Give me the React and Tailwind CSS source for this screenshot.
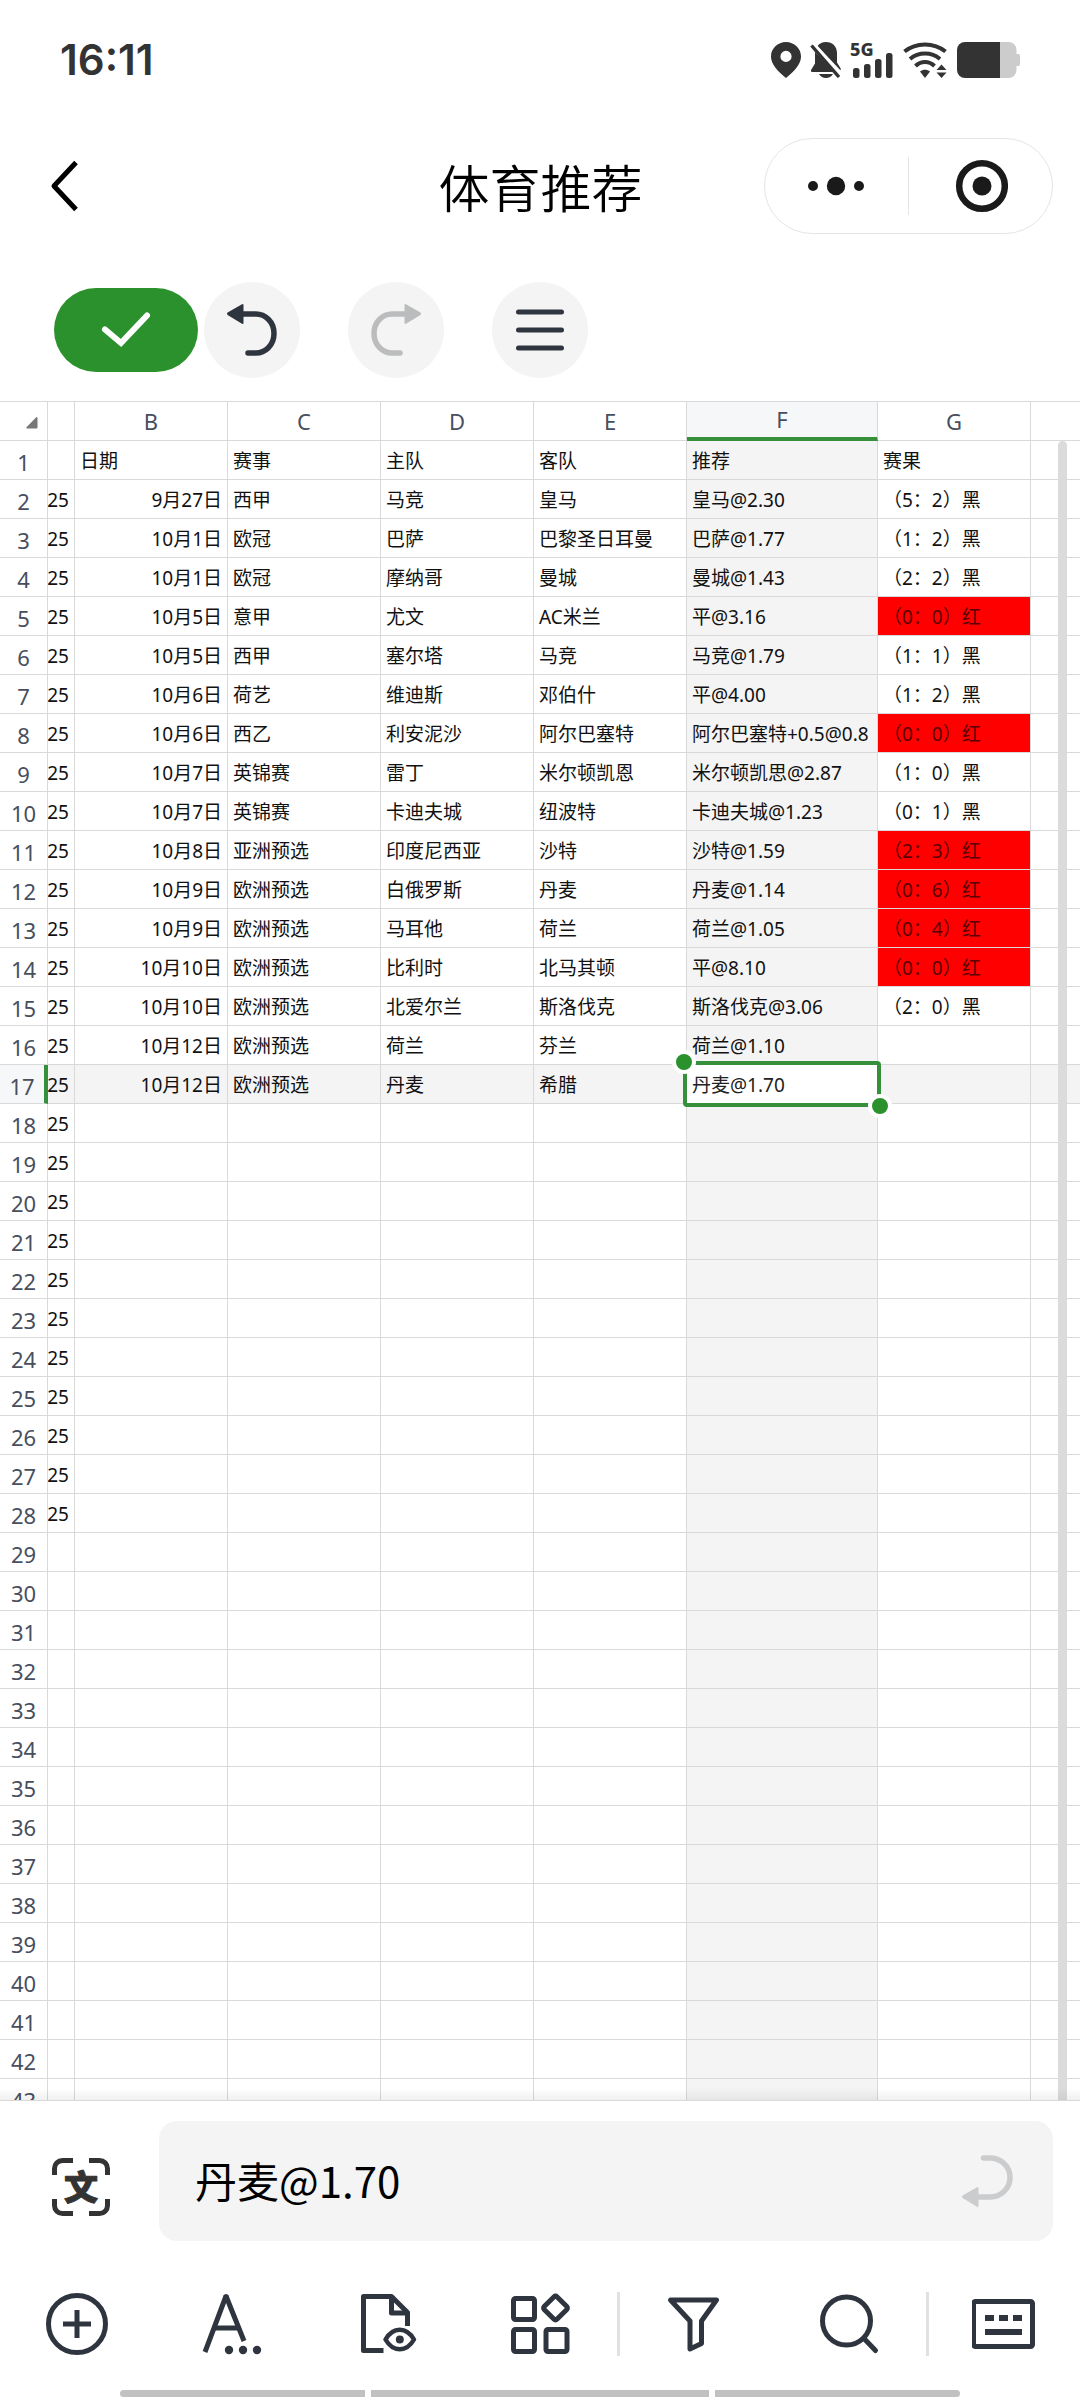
import React, { useState } from 'react';

const columns = ['B', 'C', 'D', 'E', 'F', 'G'];
const ROW_COUNT = 43;
const ACTIVE_ROW = 17;
const ACTIVE_COL = 'F';

const records = [
  ['日期', '赛事', '主队', '客队', '推荐', '赛果'],
  ['9月27日', '西甲', '马竞', '皇马', '皇马@2.30', '（5：2）黑'],
  ['10月1日', '欧冠', '巴萨', '巴黎圣日耳曼', '巴萨@1.77', '（1：2）黑'],
  ['10月1日', '欧冠', '摩纳哥', '曼城', '曼城@1.43', '（2：2）黑'],
  ['10月5日', '意甲', '尤文', 'AC米兰', '平@3.16', '（0：0）红'],
  ['10月5日', '西甲', '塞尔塔', '马竞', '马竞@1.79', '（1：1）黑'],
  ['10月6日', '荷艺', '维迪斯', '邓伯什', '平@4.00', '（1：2）黑'],
  ['10月6日', '西乙', '利安泥沙', '阿尔巴塞特', '阿尔巴塞特+0.5@0.8', '（0：0）红'],
  ['10月7日', '英锦赛', '雷丁', '米尔顿凯恩', '米尔顿凯思@2.87', '（1：0）黑'],
  ['10月7日', '英锦赛', '卡迪夫城', '纽波特', '卡迪夫城@1.23', '（0：1）黑'],
  ['10月8日', '亚洲预选', '印度尼西亚', '沙特', '沙特@1.59', '（2：3）红'],
  ['10月9日', '欧洲预选', '白俄罗斯', '丹麦', '丹麦@1.14', '（0：6）红'],
  ['10月9日', '欧洲预选', '马耳他', '荷兰', '荷兰@1.05', '（0：4）红'],
  ['10月10日', '欧洲预选', '比利时', '北马其顿', '平@8.10', '（0：0）红'],
  ['10月10日', '欧洲预选', '北爱尔兰', '斯洛伐克', '斯洛伐克@3.06', '（2：0）黑'],
  ['10月12日', '欧洲预选', '荷兰', '芬兰', '荷兰@1.10', ''],
  ['10月12日', '欧洲预选', '丹麦', '希腊', '丹麦@1.70', ''],
];

// ================= STATUS BAR =================
const StatusBar = () => (
  <div className="flex h-[120px] shrink-0 items-center justify-between px-[60px] text-[#333333]">
    <span className="font-['Inter',sans-serif] text-[42px] leading-none font-semibold">16:11</span>
    <div className="flex h-9 items-center gap-[9px]">
      <svg width="30" height="36" viewBox="0 0 30 36" fill="currentColor">
        <path fillRule="evenodd" d="M15 0C6.700 0 0 6.500 0 14.500 0 22.500 7 29.500 15 36c8-6.500 15-13.500 15-21.500C30 6.500 23.300 0 15 0Zm0 8.800a5.600 5.600 0 1 1 0 11.200 5.600 5.600 0 0 1 0-11.200Z" />
      </svg>
      <svg width="32" height="36" viewBox="0 0 32 36" fill="currentColor">
        <path d="M7.500 4C9.600 1.300 12.500 0 16 0c6.500 0 11 4.600 11 11v9.500l3.600 5.800c.3.600.2 1.400-.2 2L7.500 4Z" />
        <path d="M4.600 9.500 24 30H2.200C1 30 .6 28.800 1.200 27.800L5 21.500V11l-.4-1.500Z" />
        <path d="M9 32h14c-1.500 2.600-4 4-7 4s-5.500-1.400-7-4Z" />
        <path d="M1.500 3.500 29 35" stroke="currentColor" strokeWidth="3.400" />
        <path d="M4.500 2 32 33.500" stroke="#ffffff" strokeWidth="2" />
      </svg>
      <svg className="overflow-visible" width="43" height="36" viewBox="0 0 43 36" fill="currentColor">
        <text x="-1" y="14" fontSize="18" fontWeight="800" fontFamily="Noto Sans, sans-serif">5G</text>
        <rect x="2" y="26" width="6.500" height="10" rx="2.500" />
        <rect x="13" y="22" width="6.500" height="14" rx="2.500" />
        <rect x="24" y="17" width="6.500" height="19" rx="2.500" />
        <rect x="35" y="11" width="6.500" height="25" rx="2.500" />
      </svg>
      <svg width="45" height="36" viewBox="0 0 45 36" fill="none" stroke="currentColor" strokeWidth="4">
        <path d="M1.500 9.500C13 0 31 0 42.500 9.500" />
        <path d="M7 17C15.500 9.800 28.500 9.800 37 17" />
        <path d="M12.500 24C18 18.700 26 18.700 31.500 24" />
        <path d="M17 29.500c3-2.200 7-2.200 10 0L22 36Z" fill="currentColor" stroke="none" />
        <path d="M38.500 22.500 43.500 28h-10ZM38.500 36 43.500 30.500h-10Z" fill="currentColor" stroke="none" />
      </svg>
      <svg width="63" height="36" viewBox="0 0 63 36">
        <path d="M42 0h9.500a8 8 0 0 1 8 8v4h1.500a2 2 0 0 1 2 2v8a2 2 0 0 1-2 2h-1.500v4a8 8 0 0 1-8 8H42Z" fill="#cccccc" />
        <path d="M8 0h35v36H8a8 8 0 0 1-8-8V8a8 8 0 0 1 8-8Z" fill="#333333" />
      </svg>
    </div>
  </div>
);

// ================= TITLE BAR =================
const TitleBar = () => (
  <header className="grid h-[132px] shrink-0 grid-cols-[1fr_auto_1fr] items-center pr-[27px] pl-[50px]">
    <button type="button" aria-label="返回" className="justify-self-start">
      <svg width="28" height="52" viewBox="0 0 28 52" fill="none" stroke="#000000" strokeWidth="5">
        <path d="M26 2.500 4 26l22 23.500" strokeLinejoin="round" />
      </svg>
    </button>
    <h1 className="pt-1 pr-[22px] text-[51px] leading-[60px] font-[350] text-black">体育推荐</h1>
    <div className="flex h-24 w-[289px] items-center justify-self-end rounded-full border border-[#e5e5e5]">
      <button type="button" aria-label="更多" className="flex flex-1 justify-center">
        <svg width="58" height="20" viewBox="0 0 58 20" fill="#1a1a1a">
          <circle cx="5" cy="10" r="5" />
          <circle cx="28" cy="10" r="9.200" />
          <circle cx="51" cy="10" r="5" />
        </svg>
      </button>
      <span className="h-[58px] w-px bg-[#e5e5e5]" />
      <button type="button" aria-label="关闭" className="flex flex-1 justify-center">
        <svg width="54" height="54" viewBox="0 0 54 54">
          <circle cx="28" cy="27" r="22.800" fill="none" stroke="#1a1a1a" strokeWidth="6.500" />
          <circle cx="28" cy="27" r="9.500" fill="#1a1a1a" />
        </svg>
      </button>
    </div>
  </header>
);

const UndoIcon = () => (
  <svg width="50" height="54" viewBox="0 0 50 54" fill="none" stroke="currentColor" strokeWidth="5.500" strokeLinecap="round">
    <path d="M14 11h15c9 0 18 7.500 18 19.500S38 50 29 50h-8" />
    <path d="M15.500 2v18L1.500 11.500q-1-.7 0-1.500Z" fill="currentColor" strokeWidth="2" strokeLinejoin="round" />
  </svg>
);

// ================= EDIT BAR =================
const EditBar = () => (
  <div className="flex shrink-0 items-center pt-[30px] pb-[23px] pl-[54px]">
    <button type="button" aria-label="完成" className="flex h-[84px] w-36 items-center justify-center rounded-full bg-[#2b912d]">
      <svg width="50" height="38" viewBox="0 0 50 38" fill="none" stroke="#ffffff" strokeWidth="6" strokeLinecap="round">
        <path d="M4 18.500 20 32 46 4.500" />
      </svg>
    </button>
    <div className="flex items-center gap-12 pl-1.5">
      <button type="button" aria-label="撤销" className="flex size-24 items-center justify-center rounded-full bg-[#f4f4f4] text-[#2f353f]">
        <UndoIcon />
      </button>
      <button type="button" aria-label="重做" className="flex size-24 items-center justify-center rounded-full bg-[#f4f4f4] text-[#bbbcbd]">
        <span className="-scale-x-100"><UndoIcon /></span>
      </button>
      <button type="button" aria-label="菜单" className="flex size-24 items-center justify-center rounded-full bg-[#f4f4f4]">
        <svg width="48" height="42" viewBox="0 0 48 42" stroke="#2f353f" strokeWidth="5" strokeLinecap="round">
          <path d="M2.500 3h43M2.500 21h43M2.500 39h43" />
        </svg>
      </button>
    </div>
  </div>
);

// ================= SHEET =================
const Cell = ({ row, col, value }) => {
  const active = row === ACTIVE_ROW && col === ACTIVE_COL;
  const highlighted = row === ACTIVE_ROW || col === ACTIVE_COL;
  const won = col === 'G' && value.endsWith('红');

  let tone = 'text-[#111111]';
  if (active) tone = 'relative z-10 bg-white text-[#222222]';
  else if (won) tone = 'bg-[#ff0000] text-[#5a0000]';
  else if (highlighted) tone = 'bg-[#f4f4f4] text-[#111111]';

  return (
    <td className={`h-[39px] border-r border-b border-[#d9d9d9] p-0 ${tone}`}>
      <div className={`h-[38px] overflow-hidden px-[5px] leading-[40px] whitespace-nowrap ${col === 'B' && row > 1 ? 'text-right' : 'text-left'}`}>
        {value}
      </div>
      {active && (
        <div className="absolute -inset-1 rounded-sm border-4 border-[#368f3a]">
          <span className="absolute -top-[15px] -left-[15px] size-6 rounded-full border-4 border-white bg-[#2b912d]" />
          <span className="absolute -right-[15px] -bottom-[15px] size-6 rounded-full border-4 border-white bg-[#2b912d]" />
        </div>
      )}
    </td>
  );
};

const Sheet = () => {
  const rows = Array.from({ length: ROW_COUNT }, (_, i) => i + 1);

  return (
    <main className="relative min-h-0 flex-1 overflow-hidden border-t border-[#d9d9d9]">
      <table className="w-full table-fixed border-separate border-spacing-0 text-[19px]">
        <colgroup>
          <col className="w-12" />
          <col className="w-[27px]" />
          <col className="w-[153px]" />
          <col className="w-[153px]" />
          <col className="w-[153px]" />
          <col className="w-[153px]" />
          <col className="w-[191px]" />
          <col className="w-[153px]" />
          <col />
        </colgroup>
        <thead>
          <tr className="text-[22px] text-[#474f5e]">
            <th className="h-[39px] border-r border-b border-[#d9d9d9] p-0">
              <svg className="mt-1 ml-[26px]" width="12" height="12" viewBox="0 0 12 12" fill="#777777">
                <path d="M10.500 0v0q1 0 1 1v9.500q0 1-1 1H1.500q-1.800 0-.8-1.400Z" />
              </svg>
            </th>
            <th className="border-r border-b border-[#d9d9d9] p-0" />
            {columns.map(c => (
              <th
                key={c}
                scope="col"
                className={`h-[39px] border-r p-0 leading-[35px] font-normal ${c === ACTIVE_COL ? 'border-r-[#d9d9d9] border-b-4 border-b-[#368f3a] bg-[#f5f7f9]' : 'border-b border-[#d9d9d9]'}`}
              >
                {c}
              </th>
            ))}
            <th className="border-b border-[#d9d9d9] p-0" />
          </tr>
        </thead>
        <tbody>
          {rows.map(n => {
            const record = records[n - 1] || ['', '', '', '', '', ''];
            const active = n === ACTIVE_ROW;
            return (
              <tr key={n}>
                <th
                  scope="row"
                  className={`h-[39px] border-b border-b-[#d9d9d9] p-0 pt-1 text-[22px] leading-[34px] font-normal text-[#474f5e] ${active ? 'border-r-4 border-r-[#368f3a] bg-[#f5f7f9]' : 'border-r border-r-[#d9d9d9]'}`}
                >
                  {n}
                </th>
                <td className={`border-r border-b border-[#d9d9d9] p-0 ${active ? 'bg-[#f4f4f4]' : ''}`}>
                  <div className="flex h-[38px] justify-end overflow-hidden pr-[5px] leading-[40px] text-[#111111]">
                    {n >= 2 && n <= 28 ? '25' : ''}
                  </div>
                </td>
                {columns.map((c, i) => (
                  <Cell key={c} row={n} col={c} value={record[i]} />
                ))}
                <td className={`border-b border-[#d9d9d9] p-0 ${active ? 'bg-[#f4f4f4]' : ''}`} />
              </tr>
            );
          })}
        </tbody>
      </table>

      {/* Scroll thumb */}
      <div className="absolute top-[39px] right-[13px] bottom-0 w-[9px] rounded-t-full bg-[#dbdbdb]" />
      <div className="absolute inset-x-0 bottom-0 h-3 bg-linear-to-b from-transparent to-black/6" />
    </main>
  );
};

// ================= FORMULA BAR =================
const FormulaBar = () => {
  const [value, setValue] = useState('丹麦@1.70');

  return (
    <div className="flex shrink-0 items-center border-t border-[#d9d9d9] pt-5 pr-[27px]">
      <button type="button" aria-label="翻译" className="w-[159px] pt-3 pl-[52px]">
        <svg width="58" height="58" viewBox="0 0 58 58" fill="none" stroke="#333333" strokeWidth="5">
          <path d="M2.500 17v-6.500a8 8 0 0 1 8-8H21M37 2.500h10.500a8 8 0 0 1 8 8V17M55.500 41v6.500a8 8 0 0 1-8 8H37M21 55.500H10.500a8 8 0 0 1-8-8V41" />
          <text x="29" y="42" textAnchor="middle" fontSize="34" fontWeight="900" fill="#333333" strokeWidth="1" strokeLinejoin="round" fontFamily="Noto Sans CJK SC, sans-serif">文</text>
        </svg>
      </button>
      <div className="flex h-[120px] flex-1 items-center rounded-[18px] bg-[#f4f4f4] pr-[40px] pl-9">
        <input
          aria-label="编辑栏"
          value={value}
          onChange={e => setValue(e.target.value)}
          className="h-full min-w-0 flex-1 bg-transparent pb-1 font-['Noto_Sans_CJK_SC',sans-serif] text-[42px] text-black outline-none"
        />
        <button type="button" aria-label="换行">
          <svg width="51" height="54" viewBox="0 0 51 54" fill="none" stroke="#cbcccd" strokeWidth="5.500" strokeLinecap="round">
            <path d="M21.500 4H28c10 0 20 7.500 20 19.500S38 43 28 43H14" />
            <path d="M15.500 34v18L1.500 43.500q-1-.7 0-1.500Z" fill="#cbcccd" strokeWidth="2" strokeLinejoin="round" />
          </svg>
        </button>
      </div>
    </div>
  );
};

// ================= BOTTOM TOOLS =================
const ToolIcon = ({ children }) => (
  <svg width="64" height="64" viewBox="0 0 64 64" fill="none" stroke="#2f353f" strokeWidth="5">
    {children}
  </svg>
);

const tools = [
  {
    label: '插入',
    icon: (
      <>
        <circle cx="32" cy="32" r="28.500" />
        <path d="M32 18v28M18 32h28" />
      </>
    ),
  },
  {
    label: '字体',
    icon: (
      <>
        <line x1="6" y1="60" x2="27" y2="4" />
        <line x1="27" y1="4" x2="45" y2="49" />
        <line x1="14" y1="36" x2="39" y2="36" />
        <circle cx="27" cy="4.500" r="2.500" fill="#2f353f" stroke="none" />
        <g fill="#2f353f" stroke="none">
          <circle cx="30" cy="58" r="4.200" />
          <circle cx="44" cy="58" r="4.200" />
          <circle cx="58" cy="58" r="4.200" />
        </g>
      </>
    ),
  },
  {
    label: '查看',
    icon: (
      <g strokeLinejoin="round">
        <path d="M29.500 58.500H9.500v-54h28L53.500 20.500V34" />
        <path d="M37.500 4.500v16.500h16" />
        <path d="M31.500 47.500c7.500-13 21-13 28.500 0-7.500 13-21 13-28.500 0Z" strokeWidth="4.500" />
        <circle cx="45.800" cy="47.500" r="4" fill="#2f353f" stroke="none" />
      </g>
    ),
  },
  {
    label: '工具',
    icon: (
      <>
        <rect x="5.500" y="6.500" width="21" height="21" rx="2" />
        <rect x="5.500" y="37.500" width="21" height="22" rx="2" />
        <rect x="38" y="37.500" width="21" height="22" rx="2" />
        <rect x="38.500" y="7" width="18" height="18" rx="2" transform="rotate(45 47.500 16)" />
      </>
    ),
  },
  {
    label: '筛选',
    divider: true,
    icon: <path d="M6.500 8h46L37.500 29v22.500L26 57V29Z" strokeLinejoin="round" />,
  },
  {
    label: '查找',
    icon: (
      <g strokeLinecap="round">
        <circle cx="29.500" cy="29" r="24" />
        <path d="M47 46.500 58.500 58.500" />
      </g>
    ),
  },
  {
    label: '键盘',
    divider: true,
    icon: (
      <g transform="translate(-1 0)">
        <rect x="2.500" y="9.500" width="59" height="45" rx="2" />
        <path d="M14 26h9M28 26h9M42 26h9M14 40h37" strokeWidth="6" />
      </g>
    ),
  },
];

const BottomTools = () => (
  <nav className="grid shrink-0 grid-cols-7 items-center pt-[51px] pb-[34px]">
    {tools.map(tool => (
      <button
        key={tool.label}
        type="button"
        aria-label={tool.label}
        className={`flex h-[64px] items-center justify-center ${tool.divider ? 'border-l-[3px] border-[#e1e1e1]' : ''}`}
      >
        <ToolIcon>{tool.icon}</ToolIcon>
      </button>
    ))}
  </nav>
);

// ================= UI =================
const App = () => (
  <div className="flex h-screen flex-col overflow-hidden bg-white font-['Noto_Sans','Noto_Sans_CJK_SC',sans-serif]">
    <StatusBar />
    <TitleBar />
    <EditBar />
    <Sheet />
    <FormulaBar />
    <BottomTools />

    {/* Gesture bar */}
    <div className="flex shrink-0 gap-1.5 px-[120px] pb-[3px]">
      <span className="h-[7px] w-[245px] rounded-l-full bg-[#c1c1c1]" />
      <span className="h-[7px] flex-1 bg-[#c1c1c1]" />
      <span className="h-[7px] w-[245px] rounded-r-full bg-[#c1c1c1]" />
    </div>
  </div>
);

export default App;
